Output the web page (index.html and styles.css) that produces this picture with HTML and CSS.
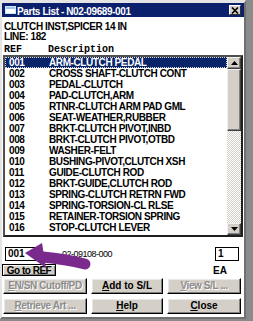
FILE: index.html
```html
<!DOCTYPE html>
<html>
<head>
<meta charset="utf-8">
<title>Parts List</title>
<link rel="stylesheet" href="styles.css">
</head>
<body>
<div class="screen">
  <div class="window">
    <div class="titlebar">
      <svg class="ticon" width="11" height="8" viewBox="0 0 11 8"><rect x="0" y="0" width="11" height="8" fill="#cfe4f8"/><rect x="1" y="1" width="9" height="6" fill="#ffffff"/><rect x="1" y="1" width="9" height="2" fill="#9cc4ec"/></svg>
      <span class="title">Parts List - N02-09689-001</span>
      <span class="xbtn"><svg width="8" height="7" viewBox="0 0 8 7"><path d="M1 0.5 L7 6.5 M7 0.5 L1 6.5" stroke="#000" stroke-width="1.6"/></svg></span>
    </div>
    <div class="content">
      <div class="hdr">CLUTCH INST,SPICER 14 IN</div>
      <div class="hdr">LINE: 182</div>
      <div class="cols"><span class="c-ref">REF</span><span>Description</span></div>
      <div class="listbox">
        <div class="rows">
          <div class="row sel"><span class="ref">001</span><span>ARM-CLUTCH PEDAL</span></div>
          <div class="row"><span class="ref">002</span><span>CROSS SHAFT-CLUTCH CONT</span></div>
          <div class="row"><span class="ref">003</span><span>PEDAL-CLUTCH</span></div>
          <div class="row"><span class="ref">004</span><span>PAD-CLUTCH,ARM</span></div>
          <div class="row"><span class="ref">005</span><span>RTNR-CLUTCH ARM PAD GML</span></div>
          <div class="row"><span class="ref">006</span><span>SEAT-WEATHER,RUBBER</span></div>
          <div class="row"><span class="ref">007</span><span>BRKT-CLUTCH PIVOT,INBD</span></div>
          <div class="row"><span class="ref">008</span><span>BRKT-CLUTCH PIVOT,OTBD</span></div>
          <div class="row"><span class="ref">009</span><span>WASHER-FELT</span></div>
          <div class="row"><span class="ref">010</span><span>BUSHING-PIVOT,CLUTCH XSH</span></div>
          <div class="row"><span class="ref">011</span><span>GUIDE-CLUTCH ROD</span></div>
          <div class="row"><span class="ref">012</span><span>BRKT-GUIDE,CLUTCH ROD</span></div>
          <div class="row"><span class="ref">013</span><span>SPRING-CLUTCH RETRN FWD</span></div>
          <div class="row"><span class="ref">014</span><span>SPRING-TORSION-CL RLSE</span></div>
          <div class="row"><span class="ref">015</span><span>RETAINER-TORSION SPRING</span></div>
          <div class="row"><span class="ref">016</span><span>STOP-CLUTCH LEVER</span></div>
        </div>
        <div class="vscroll">
          <div class="sbtn"><svg width="7" height="4" viewBox="0 0 7 4"><path d="M3.5 0 L7 4 L0 4 Z" fill="#000"/></svg></div>
          <div class="track"><div class="thumb"></div></div>
          <div class="sbtn"><svg width="7" height="4" viewBox="0 0 7 4"><path d="M0 0 L7 0 L3.5 4 Z" fill="#000"/></svg></div>
        </div>
      </div>
      <div class="refrow">
        <div class="field reffield">001</div>
        <div class="partno">02-09108-000</div>
        <div class="field qty">1</div>
      </div>
      <div class="gorow">
        <button class="gobtn">Go to REF</button>
        <span class="uom">EA</span>
      </div>
      <div class="btngrid">
        <button class="btn off"><u>E</u>N/SN Cutoff/PD</button>
        <button class="btn"><u>A</u>dd to S/L</button>
        <button class="btn off"><u>V</u>iew S/L ...</button>
        <button class="btn off"><u>R</u>etrieve Art ...</button>
        <button class="btn"><u>H</u>elp</button>
        <button class="btn"><u>C</u>lose</button>
      </div>
    </div>
  </div>
  <svg class="arrow" width="253" height="321" viewBox="0 0 253 321">
    <path d="M43 257 Q 65 259 85 264" stroke="#7a2a8c" stroke-width="11" stroke-linecap="round" fill="none"/>
    <polygon points="25,253 42,243 46,268" fill="#7a2a8c"/>
  </svg>
</div>
</body>
</html>
```
FILE: styles.css
```css
* { box-sizing: border-box; }
html, body { margin: 0; padding: 0; }
body {
  width: 253px;
  height: 321px;
  overflow: hidden;
  background: #8a8a8a;
  font-family: "Liberation Sans", Arial, sans-serif;
  font-size: 10px;
  font-weight: bold;
  color: #000;
}
.screen { position: relative; width: 253px; height: 321px; }
.window {
  width: 246px;
  height: 319px;
  background: #d4d0c8;
  border-style: solid;
  border-width: 3px 2px 2px 2px;
  border-color: #e4e4e4 #707070 #707070 #e4e4e4;
  display: flex;
  flex-direction: column;
}
.titlebar {
  height: 14px;
  flex: none;
  background: #0b206c;
  display: flex;
  align-items: center;
  padding: 0 3px;
  color: #fff;
}
.ticon { flex: none; display: block; }
.title {
  margin-left: 1px;
  line-height: 10px;
  padding-top: 3px;
  letter-spacing: -0.4px;
  white-space: nowrap;
}
.xbtn {
  margin-left: auto;
  width: 12px;
  height: 10px;
  background: #d4d0c8;
  border: 1px solid;
  border-color: #fff #303030 #303030 #fff;
  display: flex;
  align-items: center;
  justify-content: center;
}
.xbtn svg { display: block; }
.content {
  flex: 1;
  background: #fff;
  padding: 0 1px 3px 1px;
  display: flex;
  flex-direction: column;
}
.hdr {
  line-height: 10px;
  padding-left: 1px;
  letter-spacing: -0.4px;
  white-space: nowrap;
}
.hdr:first-child { margin-top: 5px; }
.cols {
  margin-top: 2px;
  font-family: "Liberation Mono", "Courier New", monospace;
  line-height: 11px;
  padding-left: 1px;
  display: flex;
}
.c-ref { width: 44px; }
.listbox {
  height: 182px;
  width: 240px;
  flex: none;
  border: 2px solid;
  border-color: #505050 #202020 #202020 #505050;
  display: flex;
  overflow: hidden;
}
.rows { flex: 1; overflow: hidden; }
.row {
  height: 11px;
  line-height: 11px;
  display: flex;
  padding-left: 4px;
  white-space: nowrap;
  letter-spacing: -0.4px;
}
.ref { width: 40px; flex: none; }
.row.sel {
  background: #0a246a;
  color: #fff;
  outline: 1px dotted #d8d8d8;
  outline-offset: -1px;
}
.vscroll {
  width: 14px;
  flex: none;
  display: flex;
  flex-direction: column;
}
.sbtn, .thumb {
  background: #d4d0c8;
  border: 1px solid;
  border-color: #f0f0f0 #404040 #404040 #f0f0f0;
  box-shadow: inset -1px -1px 0 #808080;
}
.sbtn {
  height: 12px;
  flex: none;
  display: flex;
  align-items: center;
  justify-content: center;
}
.sbtn svg { display: block; }
.track {
  flex: 1;
  background: repeating-conic-gradient(#d4d0c8 0 25%, #ffffff 0 50%) 0 0 / 2px 2px;
}
.thumb { height: 62px; }
.refrow {
  margin-top: 10px;
  height: 14px;
  flex: none;
  display: flex;
  align-items: center;
}
.field {
  height: 14px;
  border: 1px solid #000;
  line-height: 12px;
  padding-left: 2px;
  background: #fff;
}
.reffield { width: 35px; margin-left: 2px; }
.partno {
  margin-left: 22px;
  font-size: 9px;
  font-weight: normal;
  letter-spacing: -0.5px;
  color: #000;
}
.qty { width: 24px; margin-left: auto; margin-right: 4px; }
.gorow {
  margin-top: 3px;
  height: 12px;
  flex: none;
  display: flex;
  align-items: flex-end;
}
.gobtn {
  margin: 0 0 0 -1px;
  width: 54px;
  height: 12px;
  padding: 0;
  font: inherit;
  line-height: 9px;
  letter-spacing: -0.5px;
  color: #000;
  background: #d4d0c8;
  border: 1px solid #000;
  box-shadow: inset 1px 1px 0 #fff, inset -1px -1px 0 #808080;
}
.uom {
  margin-left: auto;
  margin-right: 16px;
  line-height: 10px;
}
.btngrid {
  margin-top: 2px;
  display: grid;
  grid-template-columns: 84px 72px 74px;
  grid-template-rows: 16px 16px;
  column-gap: 4px;
  row-gap: 4px;
}
.btn {
  margin: 0;
  padding: 0;
  font: inherit;
  line-height: 14px;
  color: #000;
  background: #d4d0c8;
  border: 1px solid;
  border-color: #fff #000 #000 #fff;
  box-shadow: inset -1px -1px 0 #808080, inset 1px 1px 0 #e8e8e8;
  text-align: center;
  white-space: nowrap;
}
.btn u { text-decoration-thickness: 1px; }
.btn.off {
  color: #8c8c8c;
  text-shadow: 1px 1px 0 #fff;
  letter-spacing: -0.4px;
}
.arrow {
  position: absolute;
  left: 0;
  top: 0;
  pointer-events: none;
}
```
